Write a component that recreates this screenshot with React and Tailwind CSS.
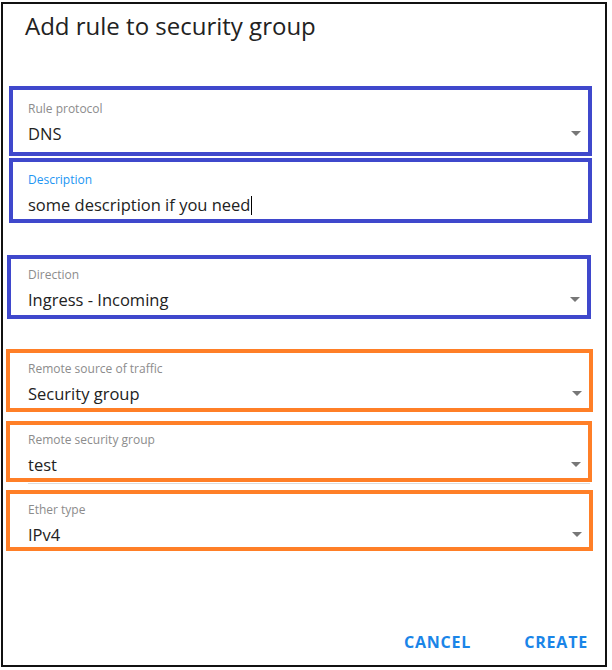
const FONT = { fontFamily: "'Open Sans', Lato, sans-serif" };

const Arrow = () => (
  <svg width="10" height="6" viewBox="0 0 10 6" className="shrink-0">
    <path d="M0 0 L10 0 L5 5 Z" fill="#777" />
  </svg>
);

const Field = ({ box, label, labelClass, value, caret, arrow = true }) => (
  <div className={box}>
    <div className={labelClass || "text-[12px] leading-[16px] text-[#8c8c8c]"}>{label}</div>
    <div className="mt-[5px] flex items-center justify-between pr-[7px]">
      <div className="flex items-center text-[16.5px] leading-[24px] text-[#222]">
        {value}
        {caret && <span className="inline-block w-[1px] h-[19px] bg-black ml-[1px]" />}
      </div>
      {arrow && <Arrow />}
    </div>
  </div>
);

export default function App() {
  return (
    <div className="w-[612px] h-[670px] bg-white" style={FONT}>
      <div className="ml-[1px] mt-[2px] w-[606px] h-[665px] border-2 border-[#111] flex flex-col">
        <h1 className="pl-[22px] pt-[7px] text-[24px] leading-[30px] text-[#222] font-normal">
          Add rule to security group
        </h1>

        <div className="flex flex-col">
          <Field
            box="mt-[45px] ml-[6px] w-[583px] h-[70px] border-4 border-[#3f48cc] pl-[15px] pt-[11px]"
            label="Rule protocol"
            value="DNS"
          />
          <Field
            box="mt-[2px] ml-[6px] w-[583px] h-[65px] border-4 border-[#3f48cc] pl-[15px] pt-[10px]"
            label="Description"
            labelClass="text-[12px] leading-[16px] text-[#2196f3]"
            value="some description if you need"
            caret
            arrow={false}
          />
          <Field
            box="mt-[32px] ml-[4px] w-[584px] h-[64px] border-4 border-[#3f48cc] pl-[17px] pt-[8px]"
            label="Direction"
            value="Ingress - Incoming"
          />
          <Field
            box="mt-[30px] ml-[3px] w-[587px] h-[63px] border-4 border-[#ff7f27] pl-[18px] pt-[8px]"
            label="Remote source of traffic"
            value="Security group"
          />
          <Field
            box="mt-[9px] ml-[3px] w-[586px] h-[61px] border-4 border-[#ff7f27] pl-[18px] pt-[7px]"
            label="Remote security group"
            value="test"
          />
          <div className="ml-[25px] w-[562px] h-[1px] bg-[#ddd] mt-[1px]" />
          <Field
            box="mt-[6px] ml-[3px] w-[587px] h-[61px] border-4 border-[#ff7f27] pl-[18px] pt-[8px]"
            label="Ether type"
            value="IPv4"
          />
        </div>

        <div className="mt-auto mb-[13px] flex justify-end gap-[53px] pr-[17px] text-[16px] leading-[20px] font-bold tracking-[0.8px] text-[#1a85e8]">
          <button>CANCEL</button>
          <button>CREATE</button>
        </div>
      </div>
    </div>
  );
}
